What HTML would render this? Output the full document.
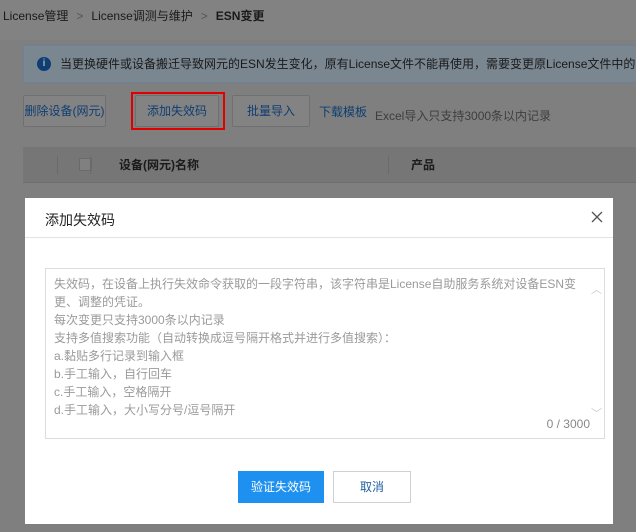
<!DOCTYPE html>
<html><head><meta charset="utf-8"><style>
*{margin:0;padding:0;box-sizing:border-box}
body{width:636px;height:532px;overflow:hidden;background:#7f7f7f;font-family:"Liberation Sans","Noto Sans CJK SC",sans-serif;font-size:12px;position:relative}
.a{position:absolute}
.bc{left:0;top:0;width:636px;height:40px;background:#828282;color:#1a1a1a;line-height:32px;font-size:12px;padding-left:3px}
.bc span{color:#555;margin:0 8px}
.info{left:23px;top:45px;width:620px;height:38px;background:#7a8791;border:1px solid #6c8197;color:#1a1a1a;line-height:36px;padding-left:36px;white-space:nowrap}
.ic{left:13px;top:11px;width:14px;height:14px;border-radius:50%;background:#0e3e74;color:#aaa;font-size:10px;line-height:14px;text-align:center;font-weight:bold}
.btn{top:95px;height:32px;border:1px solid #707070;background:#838383;color:#0f3e72;text-align:center;line-height:30px;border-radius:2px}
.th{left:23px;top:147px;width:620px;height:36px;background:#767676;border-bottom:1px solid #6e6e6e;font-weight:bold;color:#1a1a1a;line-height:36px}
.modal{left:25px;top:198px;width:588px;height:326px;background:#fff}
</style></head><body>
<div class="a bc">License管理<span>&gt;</span>License调测与维护<span>&gt;</span><b>ESN变更</b></div>
<div class="a info"><div class="a ic">i</div>当更换硬件或设备搬迁导致网元的ESN发生变化，原有License文件不能再使用，需要变更原License文件中的</div>
<div class="a btn" style="left:23px;width:83px">删除设备(网元)</div>
<div class="a btn" style="left:135px;width:84px">添加失效码</div>
<div class="a" style="left:131px;top:92px;width:94px;height:38px;border:2px solid #e00000"></div>
<div class="a btn" style="left:232px;width:78px">批量导入</div>
<div class="a" style="left:319px;top:103px;color:#0f3e72">下载模板</div>
<div class="a" style="left:375px;top:107px;color:#3e3e3e">Excel导入只支持3000条以内记录</div>
<div class="a th"><div class="a" style="left:34px;top:9px;width:1px;height:18px;background:#6a6a6a"></div><div class="a" style="left:56px;top:11px;width:13px;height:13px;border:1px solid #6a6a6a;background:#808080"></div><div class="a" style="left:67px;top:9px;width:1px;height:18px;background:#6a6a6a"></div><div class="a" style="left:96px;top:0">设备(网元)名称</div><div class="a" style="left:365px;top:9px;width:1px;height:18px;background:#6a6a6a"></div><div class="a" style="left:388px;top:0">产品</div></div>
<div class="a modal">
<div class="a" style="left:20px;top:12px;font-size:14px;color:#222">添加失效码</div>
<svg class="a" style="left:566px;top:13px" width="12" height="12" viewBox="0 0 12 12"><path d="M1 1L11 11M11 1L1 11" stroke="#555" stroke-width="1.3" fill="none"/></svg>
<div class="a" style="left:0;top:39px;width:588px;height:1px;background:#e3e3e3"></div>
<div class="a" style="left:20px;top:70px;width:560px;height:171px;border:1px solid #dcdcdc;color:#9a9a9a;line-height:18px;padding:6px 8px;font-size:12px">
失效码，在设备上执行失效命令获取的一段字符串，该字符串是License自助服务系统对设备ESN变更、调整的凭证。<br>每次变更只支持3000条以内记录<br>支持多值搜索功能（自动转换成逗号隔开格式并进行多值搜索）：<br>a.黏贴多行记录到输入框<br>b.手工输入，自行回车<br>c.手工输入，空格隔开<br>d.手工输入，大小写分号/逗号隔开
<div class="a" style="right:14px;bottom:5px;color:#888">0 / 3000</div>
<div class="a" style="right:2px;top:12px;color:#ccc;font-size:11px">︿</div>
<div class="a" style="right:2px;top:136px;color:#ccc;font-size:11px">﹀</div>
</div>
<div class="a" style="left:213px;top:273px;width:86px;height:32px;background:#1e90f0;color:#fff;text-align:center;line-height:32px">验证失效码</div>
<div class="a" style="left:308px;top:273px;width:78px;height:32px;border:1px solid #d0d0d0;color:#1f5f9f;text-align:center;line-height:30px">取消</div>
</div>
</body></html>
